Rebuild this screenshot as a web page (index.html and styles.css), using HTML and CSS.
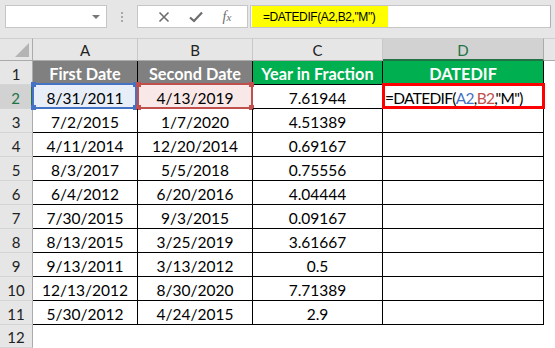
FILE: index.html
```html
<!DOCTYPE html>
<html>
<head>
<meta charset="utf-8">
<link rel="stylesheet" href="styles.css">
</head>
<body>
<div class="app">
  <div class="toolbar">
    <div class="namebox"><span class="caret"></span></div>
    <div class="grip"><i></i><i></i><i></i></div>
    <div class="fbtns">
      <svg class="ico" width="12" height="12" viewBox="0 0 12 12"><path d="M1.5 1.5 L10.5 10.5 M10.5 1.5 L1.5 10.5" stroke="#6d6d6d" stroke-width="1.6" fill="none"/></svg>
      <svg class="ico" width="14" height="12" viewBox="0 0 14 12"><path d="M1 6.5 L5 10 L13 1.5" stroke="#6d6d6d" stroke-width="2.2" fill="none"/></svg>
      <span class="fx">f<span class="fxx">x</span></span>
    </div>
    <div class="fbar"><span class="formula">=DATEDIF(A2,B2,"M")</span></div>
  </div>
  <div class="sheet">
    <div class="corner"><span class="tri"></span></div>
    <div class="ch">A</div>
    <div class="ch">B</div>
    <div class="ch">C</div>
    <div class="ch sel">D</div>
    <div class="ch last"></div>

    <div class="rh">1</div>
    <div class="c hd gray">First Date</div>
    <div class="c hd gray">Second Date</div>
    <div class="c hd green">Year in Fraction</div>
    <div class="c hd green">DATEDIF</div>
    <div class="x"></div>

    <div class="rh rsel">2</div>
    <div class="c refa">8/31/2011<span class="box bluebox"><i class="h tl"></i><i class="h tr"></i><i class="h bl"></i><i class="h br"></i></span></div>
    <div class="c refb">4/13/2019<span class="box redbox"><i class="h tl"></i><i class="h tr"></i><i class="h bl"></i><i class="h br"></i></span></div>
    <div class="c">7.61944</div>
    <div class="c edit"><span class="ftxt">=DATEDIF(<span class="ra">A2</span>,<span class="rb">B2</span>,"M")</span><span class="box hl"></span></div>
    <div class="x"></div>

    <div class="rh">3</div>
    <div class="c">7/2/2015</div>
    <div class="c">1/7/2020</div>
    <div class="c">4.51389</div>
    <div class="c"></div>
    <div class="x"></div>

    <div class="rh">4</div>
    <div class="c">4/11/2014</div>
    <div class="c">12/20/2014</div>
    <div class="c">0.69167</div>
    <div class="c"></div>
    <div class="x"></div>

    <div class="rh">5</div>
    <div class="c">8/3/2017</div>
    <div class="c">5/5/2018</div>
    <div class="c">0.75556</div>
    <div class="c"></div>
    <div class="x"></div>

    <div class="rh">6</div>
    <div class="c">6/4/2012</div>
    <div class="c">6/20/2016</div>
    <div class="c">4.04444</div>
    <div class="c"></div>
    <div class="x"></div>

    <div class="rh">7</div>
    <div class="c">7/30/2015</div>
    <div class="c">9/3/2015</div>
    <div class="c">0.09167</div>
    <div class="c"></div>
    <div class="x"></div>

    <div class="rh">8</div>
    <div class="c">8/13/2015</div>
    <div class="c">3/25/2019</div>
    <div class="c">3.61667</div>
    <div class="c"></div>
    <div class="x"></div>

    <div class="rh">9</div>
    <div class="c">9/13/2011</div>
    <div class="c">3/13/2012</div>
    <div class="c">0.5</div>
    <div class="c"></div>
    <div class="x"></div>

    <div class="rh">10</div>
    <div class="c">12/13/2012</div>
    <div class="c">8/30/2020</div>
    <div class="c">7.71389</div>
    <div class="c"></div>
    <div class="x"></div>

    <div class="rh">11</div>
    <div class="c">5/30/2012</div>
    <div class="c">4/24/2015</div>
    <div class="c">2.9</div>
    <div class="c"></div>
    <div class="x"></div>

    <div class="rh">12</div>
    <div class="e"></div>
    <div class="e"></div>
    <div class="e"></div>
    <div class="e"></div>
    <div class="x"></div>
  </div>
</div>
</body>
</html>
```

FILE: styles.css
```css
* { box-sizing: border-box; }
html, body { margin: 0; padding: 0; }
body {
  width: 555px;
  height: 348px;
  overflow: hidden;
  background: #e6e6e6;
  font-family: Lato, "Liberation Sans", sans-serif;
}
.app { width: 555px; height: 348px; display: flex; flex-direction: column; }

.toolbar {
  height: 38px;
  display: flex;
  align-items: flex-start;
  padding-top: 5px;
  background: #e6e6e6;
}
.namebox {
  margin-left: 5px;
  width: 102px;
  height: 23px;
  background: #fff;
  border: 1px solid #c6c6c6;
  position: relative;
  display: flex;
  justify-content: flex-end;
  align-items: center;
  padding-right: 6px;
}
.caret {
  width: 0; height: 0;
  border-left: 4px solid transparent;
  border-right: 4px solid transparent;
  border-top: 4px solid #777;
}
.grip {
  margin-left: 14px;
  width: 3px;
  height: 23px;
  display: flex;
  flex-direction: column;
  justify-content: center;
  gap: 2px;
}
.grip i { display: block; width: 2px; height: 2px; background: #a8a8a8; }
.fbtns {
  margin-left: 13px;
  width: 111px;
  height: 23px;
  background: #fff;
  border: 1px solid #c6c6c6;
  display: flex;
  align-items: center;
  justify-content: space-around;
  padding: 0 6px 0 10px;
}
.fx {
  font-family: "Liberation Serif", serif;
  font-style: italic;
  color: #6d6d6d;
  font-size: 14px;
  line-height: 1;
}
.fxx { font-size: 11px; }
.fbar {
  margin-left: 2px;
  width: 301px;
  height: 23px;
  background: #fff;
  border: 1px solid #c6c6c6;
  border-right-color: #b0b0b0;
  padding: 0 0 0 1px;
  display: flex;
}
.formula {
  background: #ffff00;
  width: 136px;
  height: 21px;
  display: flex;
  align-items: center;
  padding-left: 11px;
  font-family: "Liberation Sans", sans-serif;
  font-size: 12px;
  letter-spacing: -0.4px;
  color: #000;
}

.sheet {
  flex: 1;
  display: grid;
  grid-template-columns: 33px 105px 115px 130px 161px 11px;
  grid-template-rows: 23px repeat(11, 24px) 1fr;
  background: #fff;
}
.corner {
  background: #e6e6e6;
  border-right: 1px solid #ababab;
  border-bottom: 1px solid #ababab;
  border-top: 1px solid #d0d0d0;
  position: relative;
}
.tri {
  position: absolute;
  right: 3px;
  bottom: 3px;
  width: 0; height: 0;
  border-left: 14px solid transparent;
  border-bottom: 14px solid #b4b4b4;
}
.ch {
  background: #e6e6e6;
  border-right: 1px solid #c8c8c8;
  border-bottom: 1px solid #ababab;
  border-top: 1px solid #d0d0d0;
  display: flex;
  align-items: center;
  justify-content: center;
  font-size: 15px;
  color: #222;
  padding-top: 1px;
}
.ch.sel {
  background: #d2d2d2;
  color: #217346;
  border-bottom: 2px solid #217346;
  border-right-color: #ababab;
}
.ch.last { border-right: none; }
.rh {
  background: #e6e6e6;
  border-right: 1px solid #ababab;
  border-bottom: 1px solid #d4d4d4;
  display: flex;
  align-items: center;
  justify-content: center;
  font-size: 15px;
  color: #222;
  padding-top: 2px;
}
.rh.rsel {
  background: #d2d2d2;
  color: #217346;
  border-right: 2px solid #217346;
}
.c {
  border-right: 1px solid #000;
  border-bottom: 1px solid #000;
  display: flex;
  align-items: center;
  justify-content: center;
  font-size: 15.5px;
  color: #000;
  padding-top: 2px;
  position: relative;
  white-space: nowrap;
}
.hd { font-weight: bold; color: #fff; font-size: 16.3px; }
.gray { background: #808080; }
.green { background: #00b050; }
.x, .e { background: #fff; }
.refa { background: #e8eef8; }
.refb { background: #f9e8e8; }
.box { position: absolute; display: block; }
.bluebox { top: -2px; left: -1px; right: 0; bottom: -1px; border: 2px solid #4472c4; }
.redbox { top: -2px; left: -1px; right: -1px; bottom: -1px; border: 2px solid #c0504d; }
.h { position: absolute; width: 5px; height: 5px; display: block; }
.bluebox .h { background: #4472c4; }
.redbox .h { background: #c0504d; }
.h.tl { top: -3px; left: -3px; }
.h.tr { top: -3px; right: -3px; }
.h.bl { bottom: -3px; left: -3px; }
.h.br { bottom: -3px; right: -3px; }
.edit { justify-content: flex-start; padding-left: 2px; }
.ftxt { font-size: 15.5px; letter-spacing: -0.7px; }
.ra { color: #4472c4; }
.rb { color: #c0504d; }
.hl { top: -2px; left: -1px; right: -2px; bottom: -1px; border: 3px solid #ff0000; }
```
